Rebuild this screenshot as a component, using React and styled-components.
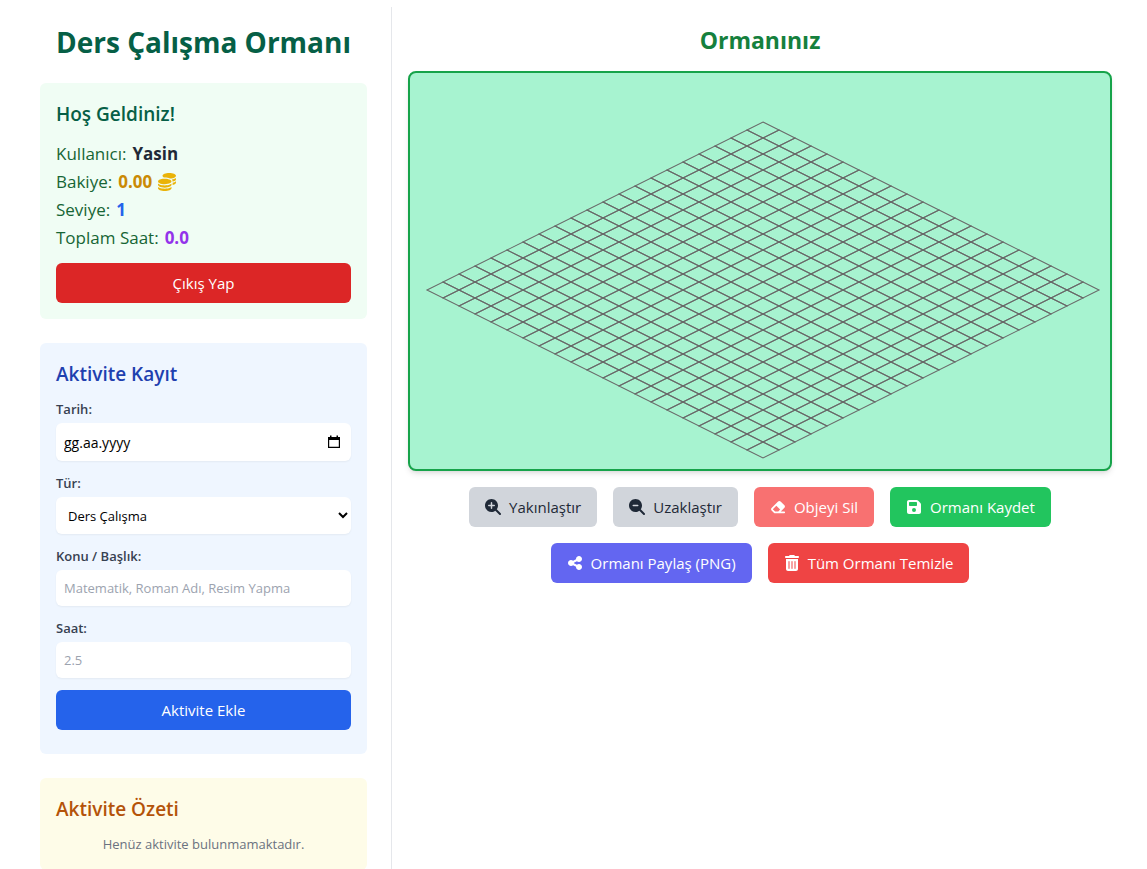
import { useState } from "react";
import styled, { createGlobalStyle } from "styled-components";
import {
  FaCoins,
  FaEraser,
  FaFloppyDisk,
  FaMagnifyingGlassMinus,
  FaMagnifyingGlassPlus,
  FaShareNodes,
  FaTrashCan,
} from "react-icons/fa6";

const GRID_SIZE = 21;
const TILE_W = 32;
const TILE_H = 16;
const ORIGIN_X = 353;
const ORIGIN_Y = 49;

const GlobalStyle = createGlobalStyle`
  *, *::before, *::after {
    box-sizing: border-box;
  }
  body {
    margin: 0;
    background: #ffffff;
    font-family: "Segoe UI", "Open Sans", sans-serif;
  }
  h1, h2, h3, p {
    margin: 0;
  }
  button, input, select {
    font-family: inherit;
  }
`;

const Page = styled.div`
  display: grid;
  grid-template-columns: 376px minmax(0, 1fr);
  padding: 7px 19px 0 16px;
`;

const Sidebar = styled.aside`
  display: flex;
  flex-direction: column;
  gap: 24px;
  padding: 18px 24px 0;
  border-right: 1px solid #e5e7eb;
`;

const Title = styled.h1`
  color: #065f46;
  font-size: 28px;
  font-weight: 700;
  line-height: 34px;
  text-align: center;
  white-space: nowrap;
`;

const Card = styled.section`
  padding: 16px;
  border-radius: 6px;
  background: ${props => props.$bg};
`;

const CardTitle = styled.h2`
  margin-bottom: 10px;
  color: ${props => props.$color};
  font-size: 19px;
  font-weight: 600;
  line-height: 30px;
`;

const Stats = styled.div`
  padding-top: 1px;
`;

const Stat = styled.p`
  display: flex;
  align-items: center;
  gap: 6px;
  color: #166534;
  font-size: 17px;
  font-weight: 500;
  line-height: 28px;
  strong {
    color: ${props => props.$color};
    font-weight: 700;
  }
  svg {
    color: #eab308;
    font-size: 18px;
  }
`;

const WideButton = styled.button`
  display: block;
  width: 100%;
  margin: ${props => props.$margin};
  padding: 8px 16px;
  border: 0;
  border-radius: 6px;
  background: ${props => props.$bg};
  color: #ffffff;
  font-size: 15px;
  line-height: 24px;
  cursor: pointer;
`;

const Field = styled.div`
  margin-bottom: 12px;
`;

const Label = styled.label`
  display: block;
  margin-bottom: 4px;
  color: #374151;
  font-size: 13px;
  font-weight: 600;
  line-height: 20px;
`;

const Input = styled.input`
  display: block;
  width: 100%;
  height: 36px;
  padding: 8px;
  border: 0;
  border-radius: 6px;
  background: #ffffff;
  box-shadow: 0 1px 2px rgba(0, 0, 0, 0.05);
  color: #000000;
  font-size: 13px;
  line-height: 20px;
  &::placeholder {
    color: #9ca3af;
    opacity: 1;
  }
`;

const DateBox = styled.div`
  position: relative;
`;

const DateInput = styled(Input)`
  height: 38px;
  font-size: 14px;
  &::placeholder {
    color: #000000;
  }
`;

const CalendarButton = styled.button`
  position: absolute;
  top: 0;
  bottom: 0;
  right: 8px;
  display: flex;
  align-items: center;
  padding: 0 2px;
  border: 0;
  background: none;
  cursor: pointer;
`;

const Select = styled.select`
  display: block;
  width: 100%;
  height: 37px;
  padding: 8px;
  border: 0;
  border-radius: 6px;
  background: #ffffff;
  box-shadow: 0 1px 2px rgba(0, 0, 0, 0.05);
  color: #000000;
  font-size: 13px;
`;

const EmptyText = styled.p`
  color: #6b7280;
  font-size: 13px;
  line-height: 20px;
  text-align: center;
`;

const Main = styled.main`
  padding: 16px 16px 0;
`;

const ForestTitle = styled.h2`
  margin-bottom: 14px;
  color: #15803d;
  font-size: 23px;
  font-weight: 700;
  line-height: 34px;
  text-align: center;
`;

const ForestCanvas = styled.div`
  overflow: hidden;
  border: 2px solid #16a34a;
  border-radius: 8px;
  background: #a7f3d0;
  box-shadow: 0 4px 6px -1px rgba(0, 0, 0, 0.1), 0 2px 4px -2px rgba(0, 0, 0, 0.1);
  svg {
    display: block;
    width: 100%;
  }
`;

const Toolbar = styled.div`
  display: flex;
  flex-wrap: wrap;
  justify-content: center;
  gap: 16px;
  margin-top: 16px;
`;

const ToolButton = styled.button`
  display: flex;
  align-items: center;
  gap: 8px;
  padding: 8px 16px;
  border: 0;
  border-radius: 6px;
  background: ${props => props.$bg};
  color: ${props => props.$color || "#ffffff"};
  font-size: 15px;
  line-height: 24px;
  cursor: pointer;
  svg {
    width: auto;
    height: 16px;
  }
`;

const tools = [
  { text: "Yakınlaştır", icon: FaMagnifyingGlassPlus, bg: "#d1d5db", color: "#1f2937" },
  { text: "Uzaklaştır", icon: FaMagnifyingGlassMinus, bg: "#d1d5db", color: "#1f2937" },
  { text: "Objeyi Sil", icon: FaEraser, bg: "#f87171" },
  { text: "Ormanı Kaydet", icon: FaFloppyDisk, bg: "#22c55e" },
  { text: "Ormanı Paylaş (PNG)", icon: FaShareNodes, bg: "#6366f1" },
  { text: "Tüm Ormanı Temizle", icon: FaTrashCan, bg: "#ef4444" },
];

// every tile is outlined on its own, so shared edges come out darker
const tiles = [];
for (let row = 0; row < GRID_SIZE; row++) {
  for (let col = 0; col < GRID_SIZE; col++) {
    const x = ORIGIN_X + (col - row) * (TILE_W / 2);
    const y = ORIGIN_Y + (col + row) * (TILE_H / 2);
    tiles.push({
      key: `${row}-${col}`,
      d: `M${x} ${y}l${TILE_W / 2} ${TILE_H / 2}l${-TILE_W / 2} ${TILE_H / 2}l${-TILE_W / 2} ${-TILE_H / 2}z`,
    });
  }
}

function ForestGrid() {
  return (
    <svg viewBox="0 0 700 396" fill="none" stroke="#696969" strokeWidth="1.1">
      {tiles.map(tile => <path key={tile.key} d={tile.d} />)}
    </svg>
  );
}

function App() {
  const [form, setForm] = useState({ date: "", type: "ders", topic: "", hours: "" });
  const change = e => setForm({ ...form, [e.target.name]: e.target.value });

  return (
    <>
      <GlobalStyle />
      <Page>
        <Sidebar>
          <Title>Ders Çalışma Ormanı</Title>
          <Card $bg="#f0fdf4">
            <CardTitle $color="#065f46">Hoş Geldiniz!</CardTitle>
            <Stats>
              <Stat $color="#1f2937">Kullanıcı: <strong>Yasin</strong></Stat>
              <Stat $color="#ca8a04">Bakiye: <strong>0.00</strong><FaCoins /></Stat>
              <Stat $color="#2563eb">Seviye: <strong>1</strong></Stat>
              <Stat $color="#9333ea">Toplam Saat: <strong>0.0</strong></Stat>
            </Stats>
            <WideButton type="button" $bg="#dc2626" $margin="11px 0 0">Çıkış Yap</WideButton>
          </Card>
          <Card as="form" $bg="#eff6ff" onSubmit={e => e.preventDefault()}>
            <CardTitle $color="#1e40af">Aktivite Kayıt</CardTitle>
            <Field>
              <Label htmlFor="date">Tarih:</Label>
              <DateBox>
                <DateInput
                  id="date"
                  name="date"
                  placeholder="gg.aa.yyyy"
                  value={form.date}
                  onChange={change}
                />
                <CalendarButton type="button" aria-label="Takvim">
                  <svg width="14" height="14" viewBox="0 0 14 14">
                    <path d="M3 0.5h1.5V2h5V0.5H11V2h2v11H1V2h2zM2.2 5v6.8h9.6V5z" fill="#000000" fillRule="evenodd" />
                  </svg>
                </CalendarButton>
              </DateBox>
            </Field>
            <Field>
              <Label htmlFor="type">Tür:</Label>
              <Select id="type" name="type" value={form.type} onChange={change}>
                <option value="ders">Ders Çalışma</option>
              </Select>
            </Field>
            <Field>
              <Label htmlFor="topic">Konu / Başlık:</Label>
              <Input
                id="topic"
                name="topic"
                placeholder="Matematik, Roman Adı, Resim Yapma"
                value={form.topic}
                onChange={change}
              />
            </Field>
            <Field>
              <Label htmlFor="hours">Saat:</Label>
              <Input
                id="hours"
                name="hours"
                type="number"
                step="0.5"
                placeholder="2.5"
                value={form.hours}
                onChange={change}
              />
            </Field>
            <WideButton type="submit" $bg="#2563eb" $margin="0 0 8px">Aktivite Ekle</WideButton>
          </Card>
          <Card $bg="#fefce8">
            <CardTitle $color="#b45309">Aktivite Özeti</CardTitle>
            <EmptyText>Henüz aktivite bulunmamaktadır.</EmptyText>
          </Card>
        </Sidebar>
        <Main>
          <ForestTitle>Ormanınız</ForestTitle>
          <ForestCanvas>
            <ForestGrid />
          </ForestCanvas>
          <Toolbar>
            {tools.map(({ text, icon: Icon, bg, color }) => (
              <ToolButton key={text} type="button" $bg={bg} $color={color}>
                <Icon />
                {text}
              </ToolButton>
            ))}
          </Toolbar>
        </Main>
      </Page>
    </>
  );
}

export default App;
